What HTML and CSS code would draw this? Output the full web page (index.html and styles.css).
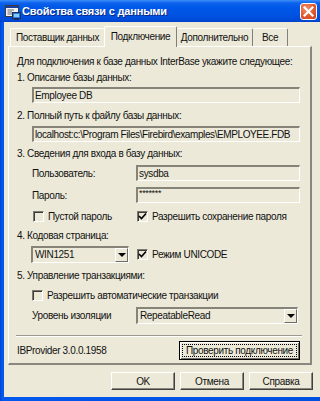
FILE: index.html
```html
<!DOCTYPE html>
<html lang="ru">
<head>
<meta charset="utf-8">
<title>Свойства связи с данными</title>
<link rel="stylesheet" href="styles.css">
</head>
<body>
<div class="window">
  <div class="titlebar">
    <svg class="app-icon" width="16" height="16" viewBox="0 0 16 16">
      <rect x="0.5" y="1.5" width="13" height="11" fill="#f4f4f4" stroke="#3a3a3a"/>
      <rect x="1" y="2" width="12" height="2" fill="#1b3f9e"/>
      <line x1="2.5" y1="6" x2="9" y2="6" stroke="#6a6a6a"/>
      <line x1="2.5" y1="8" x2="7" y2="8" stroke="#6a6a6a"/>
      <line x1="2.5" y1="10" x2="8" y2="10" stroke="#6a6a6a"/>
      <rect x="7.5" y="8.5" width="8" height="6" fill="#2f76d8" stroke="#1d2f5e"/>
      <rect x="9" y="10" width="5" height="3" fill="#7fd0ff"/>
      <rect x="9" y="15" width="5" height="1" fill="#1d2f5e"/>
    </svg>
    <span class="title">Свойства связи с данными</span>
    <div class="close">
      <svg width="11" height="11" viewBox="0 0 11 11"><path d="M1.5 1.5 L9.5 9.5 M9.5 1.5 L1.5 9.5" stroke="#fff" stroke-width="2.2" stroke-linecap="square"/></svg>
    </div>
  </div>
  <div class="frame">
    <div class="client">
      <div class="tabs">
        <div class="tab tab-provider">Поставщик данных</div>
        <div class="tab tab-connect active">Подключение</div>
        <div class="tab tab-extra">Дополнительно</div>
        <div class="tab tab-all">Все</div>
      </div>
      <div class="panel">
        <div class="lbl intro">Для подключения к базе данных InterBase укажите следующее:</div>
        <div class="lbl step1">1. Описание базы данных:</div>
        <div class="edit edit-wide e1">Employee DB</div>
        <div class="lbl step2">2. Полный путь к файлу базы данных:</div>
        <div class="edit edit-wide e2">localhost:c:\Program Files\Firebird\examples\EMPLOYEE.FDB</div>
        <div class="lbl step3">3. Сведения для входа в базу данных:</div>
        <div class="row row-user">
          <span class="row-label">Пользователь:</span>
          <div class="edit edit-narrow">sysdba</div>
        </div>
        <div class="row row-pass">
          <span class="row-label">Пароль:</span>
          <div class="edit edit-narrow pass">*******</div>
        </div>
        <div class="row row-checks">
          <label class="check check-first"><span class="box"></span>Пустой пароль</label>
          <label class="check"><span class="box checked"><svg width="9" height="9" viewBox="0 0 9 9"><path d="M1 4 L3.5 6.5 L8 1.5" fill="none" stroke="#000" stroke-width="1.6"/></svg></span>Разрешить сохранение пароля</label>
        </div>
        <div class="lbl step4">4. Кодовая страница:</div>
        <div class="row row-codepage">
          <div class="select select-cp"><span class="sel-text">WIN1251</span><span class="drop"><span class="tri"></span></span></div>
          <label class="check"><span class="box checked"><svg width="9" height="9" viewBox="0 0 9 9"><path d="M1 4 L3.5 6.5 L8 1.5" fill="none" stroke="#000" stroke-width="1.6"/></svg></span>Режим UNICODE</label>
        </div>
        <div class="lbl step5">5. Управление транзакциями:</div>
        <div class="row row-auto">
          <label class="check"><span class="box"></span>Разрешить автоматические транзакции</label>
        </div>
        <div class="row row-iso">
          <span class="row-label">Уровень изоляции</span>
          <div class="select select-iso"><span class="sel-text">RepeatableRead</span><span class="drop"><span class="tri"></span></span></div>
        </div>
        <div class="separator"></div>
        <div class="row row-provider">
          <span class="provider">IBProvider 3.0.0.1958</span>
          <div class="btn btn-test"><span class="focus">Проверить подключение</span></div>
        </div>
      </div>
      <div class="buttons">
        <div class="btn btn-dlg">OK</div>
        <div class="btn btn-dlg">Отмена</div>
        <div class="btn btn-dlg">Справка</div>
      </div>
    </div>
  </div>
</div>
</body>
</html>
```

FILE: styles.css
```css
* { box-sizing: border-box; margin: 0; padding: 0; }
html, body { width: 320px; height: 401px; overflow: hidden; }
body {
  font-family: "Liberation Sans", Arial, sans-serif;
  font-size: 10px;
  letter-spacing: -0.35px;
  color: #111;
  background: #0054e3;
}
.window { width: 320px; height: 401px; display: flex; flex-direction: column; }

.titlebar {
  height: 22px;
  flex: none;
  display: flex;
  align-items: center;
  padding-left: 5px;
  background: linear-gradient(to bottom, #3d8ff9 0, #0e62ec 3px, #0058e8 7px, #0054e3 14px, #004ad8 20px, #003fc6 22px);
}
.app-icon { flex: none; margin-top: 1px; }
.title {
  margin-left: 1px;
  color: #fff;
  font-weight: bold;
  font-size: 11px;
  letter-spacing: -0.2px;
  text-shadow: 1px 1px 0 #0a2a80;
  white-space: nowrap;
}
.close {
  margin-left: auto;
  margin-right: 3px;
  width: 17px;
  height: 17px;
  border: 1px solid #fff;
  border-radius: 3px;
  background: radial-gradient(circle at 35% 30%, #f2906c 0, #e2572c 55%, #c94320 100%);
  display: flex;
  align-items: center;
  justify-content: center;
}

.frame {
  flex: 1;
  display: flex;
  padding: 0 0 4px 4px;
  background: linear-gradient(to right, #0042d0, #0058ec 2px, #0050e0);
}
.client {
  flex: 1;
  background: #ece9d8;
  display: flex;
  flex-direction: column;
}

.tabs {
  display: flex;
  align-items: flex-end;
  margin-top: 4px;
  height: 20px;
  padding-left: 6px;
}
.tab {
  height: 18px;
  line-height: 17px;
  text-align: center;
  white-space: nowrap;
  border-top: 1px solid #fff;
  border-left: 1px solid #fff;
  border-right: 1px solid #808080;
  background: #ece9d8;
  border-radius: 2px 2px 0 0;
}
.tab-provider { width: 94px; border-right: none; }
.tab-connect { width: 73px; }
.tab-extra { width: 76px; border-left: none; }
.tab-all { width: 35px; border-left: none; }
.tab.active {
  height: 21px;
  margin-bottom: -1px;
  line-height: 19px;
  position: relative;
  z-index: 1;
  padding-bottom: 1px;
}

.panel {
  margin-left: 4px;
  width: 304px;
  height: 319px;
  border-top: 1px solid #fff;
  border-left: 1px solid #fff;
  border-right: 2px solid #8a887e;
  border-bottom: 2px solid #8a887e;
  padding: 8px 10px 0 8px;
  display: flex;
  flex-direction: column;
}
.lbl { height: 13px; line-height: 13px; white-space: nowrap; }
.step1 { margin-top: 3px; }
.step2 { margin-top: 6px; }
.step3 { margin-top: 5px; }
.step4 { margin-top: 6px; }
.step5 { margin-top: 6px; }

.edit {
  height: 16px;
  line-height: 13px;
  border-top: 2px solid #868479;
  border-left: 2px solid #868479;
  border-right: 1px solid #fff;
  border-bottom: 1px solid #fff;
  padding-left: 1px;
  white-space: nowrap;
  overflow: hidden;
}
.edit-wide { margin-left: 15px; width: 268px; }
.e1 { margin-top: 3px; }
.e2 { margin-top: 4px; letter-spacing: -0.4px; }
.edit-narrow { width: 164px; }
.pass { font-size: 9px; line-height: 9px; }

.row { display: flex; align-items: center; }
.row-label { width: 104px; margin-left: 15px; white-space: nowrap; }
.row-user { margin-top: 5px; }
.row-pass { margin-top: 6px; }
.row-checks { margin-top: 7px; height: 13px; padding-left: 16px; }
.check { display: flex; align-items: center; white-space: nowrap; }
.check-first { width: 104px; }
.box {
  width: 11px;
  height: 11px;
  margin-right: 4px;
  border-top: 1px solid #7b7970;
  border-left: 1px solid #7b7970;
  border-right: 1px solid #fff;
  border-bottom: 1px solid #fff;
  box-shadow: inset 1px 1px 0 #3c3b37;
  display: flex;
  align-items: center;
  justify-content: center;
  flex: none;
}
.row-codepage { margin-top: 4px; height: 17px; padding-left: 14px; }
.select {
  height: 17px;
  display: flex;
  border-top: 2px solid #868479;
  border-left: 2px solid #868479;
  border-right: 1px solid #fff;
  border-bottom: 1px solid #fff;
}
.select-cp { width: 98px; margin-right: 8px; }
.select-iso { width: 162px; }
.sel-text { flex: 1; line-height: 13px; padding-left: 2px; white-space: nowrap; overflow: hidden; }
.drop {
  width: 13px;
  height: 14px;
  flex: none;
  border-top: 1px solid #fff;
  border-left: 1px solid #fff;
  border-right: 1px solid #6f6d66;
  border-bottom: 1px solid #6f6d66;
  display: flex;
  align-items: center;
  justify-content: center;
}
.tri {
  width: 0;
  height: 0;
  border-left: 4px solid transparent;
  border-right: 4px solid transparent;
  border-top: 4px solid #000;
}
.row-auto { margin-top: 7px; height: 13px; padding-left: 15px; }
.row-iso { margin-top: 5px; }
.row-iso .row-label { width: 104px; }

.separator {
  margin-top: 11px;
  margin-left: -1px;
  width: 286px;
  height: 2px;
  border-top: 1px solid #9c9a90;
  border-bottom: 1px solid #fff;
}
.row-provider { margin-top: 4px; justify-content: space-between; }
.provider { white-space: nowrap; }

.btn {
  display: flex;
  align-items: center;
  justify-content: center;
  white-space: nowrap;
  background: #ece9d8;
  border-top: 1px solid #fff;
  border-left: 1px solid #fff;
  border-right: 1px solid #404040;
  border-bottom: 1px solid #404040;
  box-shadow: inset -1px -1px 0 #8a887e;
}
.btn-test {
  width: 121px;
  height: 19px;
  border: 1px solid #000;
  box-shadow: inset 1px 1px 0 #fff, inset -1px -1px 0 #6f6d66;
  padding: 2px;
}
.focus {
  flex: 1;
  align-self: stretch;
  border: 1px dotted #000;
  text-align: center;
  line-height: 11px;
}
.buttons {
  margin-top: 7px;
  display: flex;
  justify-content: flex-end;
  gap: 5px;
  padding-right: 7px;
}
.btn-dlg { width: 64px; height: 18px; }
```
